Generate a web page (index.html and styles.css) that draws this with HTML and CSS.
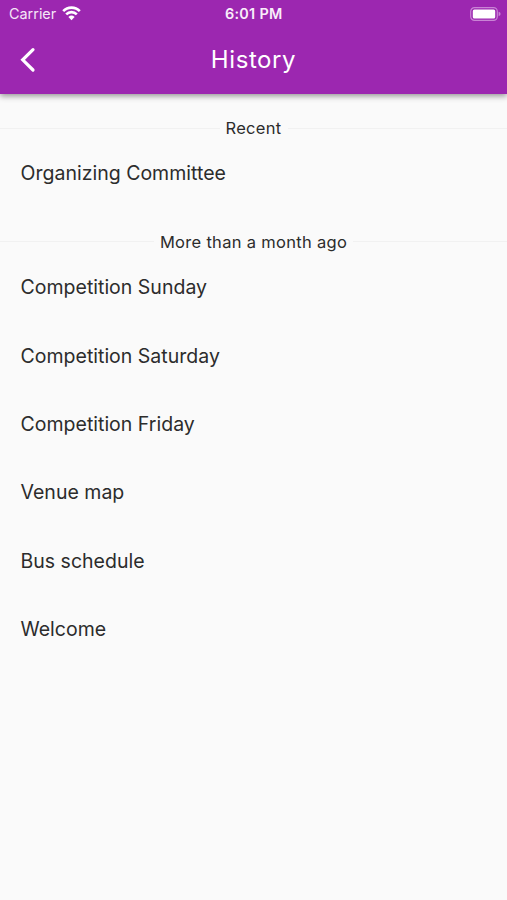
FILE: index.html
```html
<!DOCTYPE html>
<html lang="en">
<head>
    <meta charset="UTF-8">
    <meta name="viewport" content="width=device-width, initial-scale=1.0">
    <title>History</title>
    <link rel="stylesheet" href="styles.css">
</head>
<body>

<header class="app-header">
    <div class="status-bar">
        <div class="carrier">
            <span>Carrier</span>
            <svg class="wifi" viewBox="0 0 19 15" width="19" height="15">
                <path d="M1.2 5.2 A11.5 11.5 0 0 1 17.8 5.2" />
                <path d="M4.2 8.4 A7.3 7.3 0 0 1 14.8 8.4" />
                <path class="wifi-dot" d="M6.4 11 A4.5 4.5 0 0 1 12.6 11 L9.5 14.2 Z" />
            </svg>
        </div>
        <span class="time">6:01 PM</span>
        <svg class="battery" viewBox="0 0 31 14" width="31" height="14">
            <rect class="battery-frame" x="0.7" y="0.6" width="26.6" height="12.8" rx="3.8" />
            <rect class="battery-level" x="2.8" y="2.5" width="22.4" height="9" rx="1.6" />
            <path class="battery-cap" d="M28.6 4.8 Q30.6 5.4 30.6 7 Q30.6 8.6 28.6 9.2 Z" />
        </svg>
    </div>
    <div class="nav-bar">
        <a class="back-link" href="#" aria-label="Back">
            <svg viewBox="0 0 16 26" width="16" height="26">
                <path d="M13 2.6 L2.7 12.8 L13 23" />
            </svg>
        </a>
        <h1>History</h1>
    </div>
</header>

<main class="history">
    <section class="history-group">
        <h2 class="divider"><span>Recent</span></h2>
        <ul>
            <li>Organizing Committee</li>
        </ul>
    </section>
    <section class="history-group">
        <h2 class="divider"><span>More than a month ago</span></h2>
        <ul>
            <li>Competition Sunday</li>
            <li>Competition Saturday</li>
            <li>Competition Friday</li>
            <li>Venue map</li>
            <li>Bus schedule</li>
            <li>Welcome</li>
        </ul>
    </section>
</main>

</body>
</html>
```
FILE: styles.css
```css
* {
    margin: 0;
    padding: 0;
    box-sizing: border-box;
}
body {
    font-family: 'Inter', sans-serif;
    background-color: #fafafa;
    color: #2c2c2c;
    min-height: 100vh;
}
.app-header {
    height: 94px;
    background-color: #9c27b0;
    color: #fff;
    box-shadow: 0 2px 6px rgba(0, 0, 0, 0.42);
}
.status-bar {
    display: grid;
    grid-template-columns: 1fr auto 1fr;
    align-items: center;
    height: 27px;
    padding: 0 6px 0 9px;
}
.carrier {
    display: flex;
    align-items: center;
    gap: 5.5px;
    font-size: 14.4px;
    color: #f5e6f7;
}
.wifi path {
    fill: none;
    stroke: #fff;
    stroke-width: 2.6;
}
.wifi .wifi-dot {
    fill: #fff;
    stroke: none;
}
.time {
    margin-left: -2.5px;
    font-size: 14.4px;
    font-weight: 600;
    letter-spacing: 0.3px;
    color: #f9eefa;
}
.battery {
    justify-self: end;
}
.battery-frame {
    fill: none;
    stroke: #c984d5;
    stroke-width: 1.2;
}
.battery-level {
    fill: #fff;
}
.battery-cap {
    fill: #c984d5;
}
.nav-bar {
    display: grid;
    grid-template-columns: 60px 1fr 60px;
    align-items: center;
    height: 66px;
}
.back-link {
    display: flex;
    padding-left: 20px;
}
.back-link path {
    fill: none;
    stroke: #fff;
    stroke-width: 3.2;
    stroke-linecap: round;
}
h1 {
    padding-bottom: 1px;
    text-align: center;
    font-size: 24px;
    font-weight: 400;
    letter-spacing: 0.6px;
}
.history {
    padding-top: 23px;
}
.divider {
    display: flex;
    align-items: center;
    height: 22px;
    font-size: 16.5px;
    font-weight: 400;
    letter-spacing: 0.3px;
}
.divider::before,
.divider::after {
    content: "";
    flex: 1;
    height: 1px;
    background-color: #f1f1f1;
}
.divider span {
    padding: 0 6px;
}
.history-group ul {
    list-style: none;
    padding-bottom: 23.4px;
}
.history-group li {
    display: flex;
    align-items: center;
    height: 68.4px;
    padding: 0.6px 0 0 20.5px;
    font-size: 19.5px;
    letter-spacing: 0.01px;
}
```
